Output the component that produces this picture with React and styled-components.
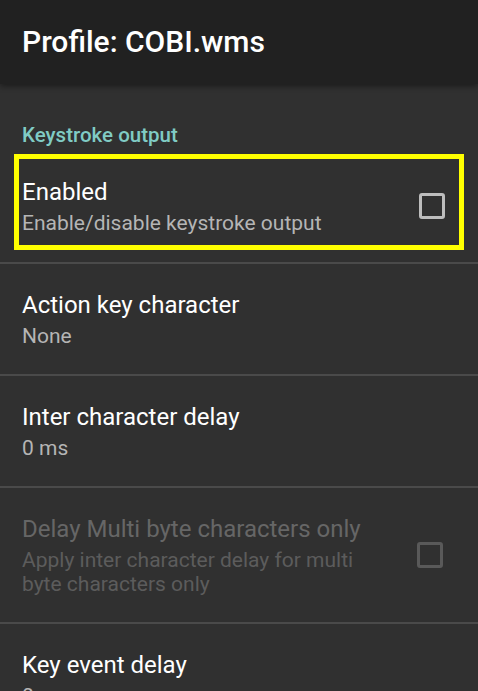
import React from "react";
import styled, { createGlobalStyle } from "styled-components";

const GlobalStyle = createGlobalStyle`
    html, body {
        margin: 0;
        padding: 0;
        background: #303030;
    }
    body {
        font-family: Roboto, "Noto Sans", sans-serif;
        -webkit-font-smoothing: antialiased;
    }
`;

const Screen = styled.div`
    width: 478px;
    height: 691px;
    overflow: hidden;
    background: #303030;
    display: flex;
    flex-direction: column;
`;

const AppBar = styled.header`
    height: 84px;
    flex-shrink: 0;
    background: #212121;
    display: flex;
    align-items: center;
    padding: 0 22px;
    box-sizing: border-box;
    box-shadow: 0 2px 6px rgba(0, 0, 0, 0.45);
    position: relative;
    z-index: 1;
    h1 {
        margin: 0;
        font-size: 30px;
        font-weight: 500;
        color: #fff;
        padding-bottom: 1px;
    }
`;

const SectionTitle = styled.div`
    margin-top: 39px;
    padding: 0 22px;
    height: 24px;
    line-height: 24px;
    font-size: 20.5px;
    font-weight: 500;
    color: #80cbc4;
`;

const FocusWrap = styled.div`
    padding: 7px 14px 12px;
    border-bottom: 2px solid #4a4a4a;
`;

const FocusBox = styled.div`
    border: 5px solid #ffff00;
    display: flex;
    align-items: center;
    padding: 18px 14px 10px 3px;
`;

const Row = styled.div`
    display: flex;
    align-items: center;
    padding: 26px 35px 26px 22px;
    border-bottom: 2px solid #4a4a4a;
`;

const Texts = styled.div`
    flex: 1;
    min-width: 0;
    display: flex;
    flex-direction: column;
    gap: 4px;
`;

const Title = styled.div`
    font-size: 24px;
    line-height: 30px;
    color: ${p => (p.disabled ? "#666666" : "#ffffff")};
`;

const Summary = styled.div`
    font-size: 21px;
    line-height: 24px;
    color: ${p => (p.disabled ? "#5c5c5c" : "#b5b5b5")};
    max-width: ${p => (p.narrow ? "360px" : "none")};
`;

const CheckBox = styled.div`
    width: 26px;
    height: 26px;
    box-sizing: border-box;
    border: 3px solid ${p => (p.disabled ? "#595959" : "#bdbdbd")};
    border-radius: 3px;
    flex-shrink: 0;
`;

const rows = [
    { title: "Action key character", summary: "None" },
    { title: "Inter character delay", summary: "0 ms" },
    {
        title: "Delay Multi byte characters only",
        summary: "Apply inter character delay for multi byte characters only",
        disabled: true,
        checkbox: true,
    },
    { title: "Key event delay", summary: "0 ms" },
];

export default function App() {
    return (
        <Screen>
            <GlobalStyle />
            <AppBar>
                <h1>Profile: COBI.wms</h1>
            </AppBar>
            <SectionTitle>Keystroke output</SectionTitle>
            <FocusWrap>
                <FocusBox>
                    <Texts>
                        <Title>Enabled</Title>
                        <Summary>Enable/disable keystroke output</Summary>
                    </Texts>
                    <CheckBox />
                </FocusBox>
            </FocusWrap>
            {rows.map(r => (
                <Row key={r.title}>
                    <Texts>
                        <Title disabled={r.disabled}>{r.title}</Title>
                        <Summary disabled={r.disabled} narrow={r.checkbox}>
                            {r.summary}
                        </Summary>
                    </Texts>
                    {r.checkbox && <CheckBox disabled={r.disabled} />}
                </Row>
            ))}
        </Screen>
    );
}
